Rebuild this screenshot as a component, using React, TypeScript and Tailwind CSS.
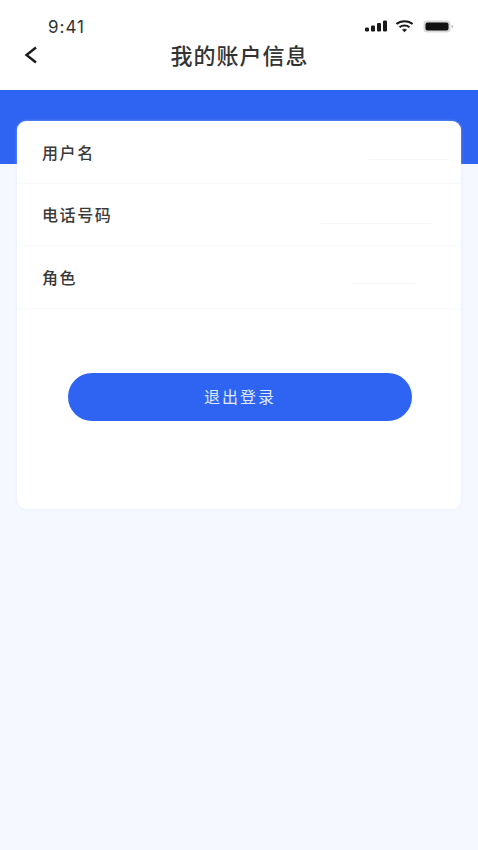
const rows = [
  { label: "用户名", line: "mt-[15px] mr-[12px] w-[80px]" },
  { label: "电话号码", line: "mt-[19px] mr-[30px] w-[110px]" },
  { label: "角色", line: "mt-[13px] mr-[46px] w-[62px]" },
];

function StatusIcons() {
  return (
    <div className="flex items-center">
      <svg width="22" height="12" viewBox="0 0 22 12" fill="#1a1a1a">
        <rect x="0" y="7.5" width="4" height="4" rx="1.2" />
        <rect x="6" y="5.5" width="4" height="6" rx="1" />
        <rect x="12" y="3" width="4" height="8.5" rx="1" />
        <rect x="18" y="0.5" width="4" height="11" rx="1" />
      </svg>
      <svg className="ml-[8px]" width="19" height="14" viewBox="0 0 20 14" fill="none" stroke="#1a1a1a" strokeWidth="2.1">
        <path d="M1.5 5C6 0.9 14 0.9 18.5 5" />
        <path d="M4.8 8.2C7.6 5.8 12.4 5.8 15.2 8.2" />
        <path d="M10 13.2L7.8 11C9 10 11 10 12.2 11Z" fill="#1a1a1a" strokeWidth="0.6" />
      </svg>
      <svg className="ml-[9px]" width="31" height="13" viewBox="0 0 31 13">
        <rect x="0.5" y="0.5" width="27" height="12" rx="3.5" fill="#d9d9d9" />
        <rect x="2.5" y="2.5" width="23" height="8" rx="2" fill="#111111" />
        <rect x="28.5" y="5" width="1.5" height="3" rx="0.75" fill="#bdbdbd" />
      </svg>
    </div>
  );
}

export default function App() {
  return (
    <div className="min-h-[850px] bg-[#f5f8ff] font-['Noto_Sans_CJK_SC','Noto_Sans',sans-serif]">
      {/* Header */}
      <div className="h-[90px] bg-white">
        <div className="flex h-[37px] items-end justify-between pl-[48px] pr-[24px]">
          <span className="font-['Inter',sans-serif] text-[17px] leading-[20px] tracking-[1px] text-[#333333]">
            9:41
          </span>
          <div className="mb-[4px]">
            <StatusIcons />
          </div>
        </div>
        <div className="relative flex h-[34px] items-center justify-center">
          <svg
            className="absolute left-[23px] top-[8px]"
            width="16"
            height="20"
            viewBox="0 0 16 20"
            fill="none"
            stroke="#1a1a1a"
            strokeWidth="2.4"
          >
            <path d="M13 2.5L3.5 10L13 17.5" />
          </svg>
          <h1 className="pl-[1px] text-[22px] font-medium tracking-[1px] text-[#333333]">我的账户信息</h1>
        </div>
      </div>

      <div className="h-[74px] bg-[#2f64f2]" />

      {/* Card */}
      <div className="mx-[17px] -mt-[43px] h-[388px] rounded-[9px] bg-white shadow-[0_0_3px_rgba(210,220,240,0.5)]">
        {rows.map((row) => (
          <div
            key={row.label}
            className="flex h-[62.5px] items-center justify-between border-b border-[#f8f9fc] pl-[25px] text-[16px] font-medium tracking-[1.6px] text-[#3a3a3a]"
          >
            <span>{row.label}</span>
            <span className={`h-px bg-[#f6f6f7] ${row.line}`} />
          </div>
        ))}
        <div className="mt-[64px] pl-[51px]">
          <button className="h-[48px] w-[344px] rounded-full bg-[#2f64f2] pb-[2px] text-[16px] tracking-[2px] text-[#dfe8ff]">
            退出登录
          </button>
        </div>
      </div>
    </div>
  );
}
